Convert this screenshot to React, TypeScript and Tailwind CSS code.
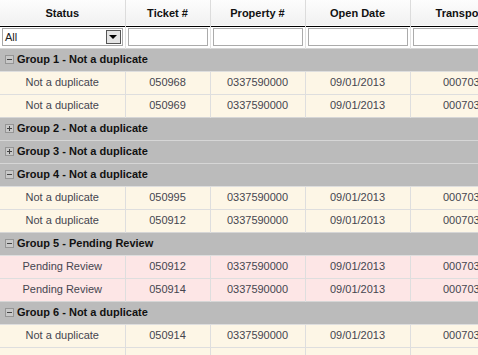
import { Fragment } from "react";

type Row = { status: string; ticket: string; property: string; date: string; transp: string };
type Group = { title: string; open: boolean; pending?: boolean; rows: Row[] };

const nd = (ticket: string): Row => ({
  status: "Not a duplicate",
  ticket,
  property: "0337590000",
  date: "09/01/2013",
  transp: "0007030000",
});
const pr = (ticket: string): Row => ({ ...nd(ticket), status: "Pending Review" });

const groups: Group[] = [
  { title: "Group 1 - Not a duplicate", open: true, rows: [nd("050968"), nd("050969")] },
  { title: "Group 2 - Not a duplicate", open: false, rows: [] },
  { title: "Group 3 - Not a duplicate", open: false, rows: [] },
  { title: "Group 4 - Not a duplicate", open: true, rows: [nd("050995"), nd("050912")] },
  { title: "Group 5 - Pending Review", open: true, pending: true, rows: [pr("050912"), pr("050914")] },
  { title: "Group 6 - Not a duplicate", open: true, rows: [nd("050914"), { status: "", ticket: "", property: "", date: "", transp: "" }] },
];

const cols = [
  { label: "Status", w: "w-[125px]" },
  { label: "Ticket #", w: "w-[85px]" },
  { label: "Property #", w: "w-[95px]" },
  { label: "Open Date", w: "w-[105px]" },
  { label: "Transponder #", w: "w-[127px]" },
];

function Toggle({ open }: { open: boolean }) {
  return (
    <span className="relative inline-block size-[9px] border border-[#959595] bg-[#c8c8c8]">
      <span className="absolute left-[1px] top-[3px] h-px w-[5px] bg-[#444]" />
      {!open && <span className="absolute left-[3px] top-[1px] h-[5px] w-px bg-[#444]" />}
    </span>
  );
}

export default function App() {
  return (
    <div className="h-[355px] w-[478px] overflow-hidden bg-white font-['Liberation_Sans',Arial,sans-serif] text-[11px]">
      <table className="w-[537px] table-fixed border-collapse">
        <colgroup>
          {cols.map((c) => (
            <col key={c.label} className={c.w} />
          ))}
        </colgroup>
        <thead>
          <tr className="h-[26px] border-b border-black bg-gradient-to-b from-[#fdfdfd] to-[#f1f1f1]">
            {cols.map((c) => (
              <th key={c.label} className="border-r border-[#dcdcdc] pt-px text-center font-bold text-[#111]">
                {c.label}
              </th>
            ))}
          </tr>
          <tr className="h-[22px] bg-white">
            <th className="border-r border-[#e2e2e2] px-[2px] font-normal">
              <div className="flex h-[18px] items-center border border-[#a8a8a8] bg-white">
                <span className="flex-1 pl-[2px] text-left text-[11px] text-[#222]">All</span>
                <span className="mr-px flex h-[14px] w-[15px] items-center justify-center border border-[#555] bg-[#e4e4e4]">
                  <span className="h-0 w-0 border-x-[4px] border-t-[4px] border-x-transparent border-t-black" />
                </span>
              </div>
            </th>
            {cols.slice(1).map((c) => (
              <th key={c.label} className="border-r border-[#e2e2e2] px-[2px] font-normal">
                <div className="h-[18px] border border-[#ababab] bg-white" />
              </th>
            ))}
          </tr>
        </thead>
        <tbody>
          {groups.map((g) => (
            <Fragment key={g.title}>
              <tr className="h-[23px] border-t border-[#d6d6d6] bg-[#bbbbbb]">
                <td colSpan={5} className="px-[5px]">
                  <div className="flex items-center gap-[3px]">
                    <Toggle open={g.open} />
                    <span className="font-bold text-[#111]">{g.title}</span>
                  </div>
                </td>
              </tr>
              {g.open &&
                g.rows.map((r, i) => (
                  <tr
                    key={i}
                    className={`h-[23px] border-t border-[#dedede] text-center text-[#45454f] ${
                      g.pending ? "bg-[#fde6e6]" : "bg-[#fdf6e6]"
                    }`}
                  >
                    <td className="border-r border-[#dedede]">{r.status}</td>
                    <td className="border-r border-[#dedede]">{r.ticket}</td>
                    <td className="border-r border-[#dedede]">{r.property}</td>
                    <td className="border-r border-[#dedede]">{r.date}</td>
                    <td className="whitespace-nowrap border-r border-[#dedede]">{r.transp}</td>
                  </tr>
                ))}
            </Fragment>
          ))}
        </tbody>
      </table>
    </div>
  );
}
